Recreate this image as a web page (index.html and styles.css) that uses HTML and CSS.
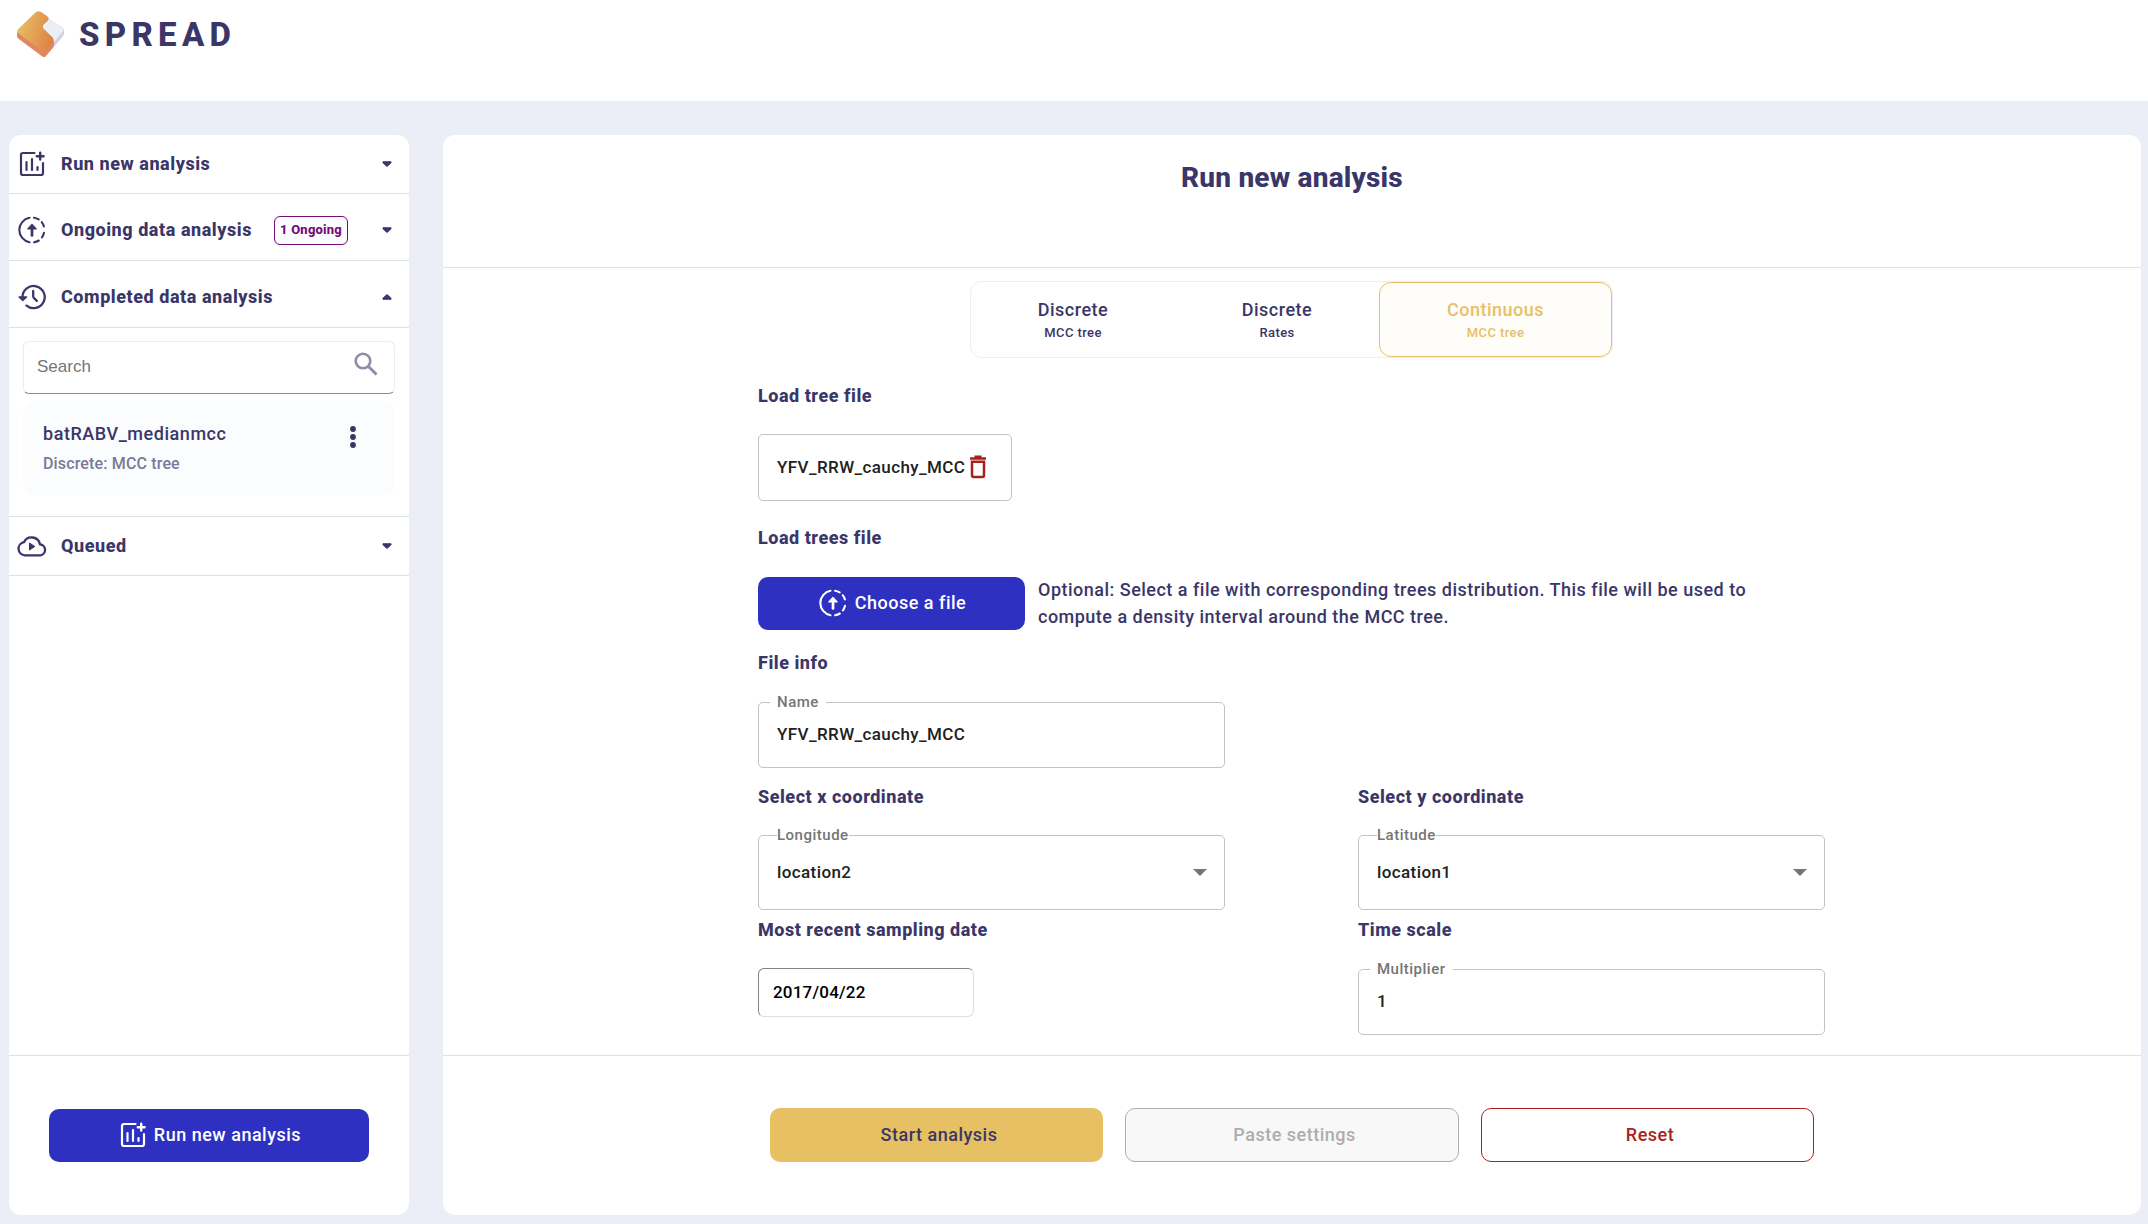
FILE: index.html
```html
<!DOCTYPE html>
<html lang="en">
<head>
<meta charset="utf-8">
<title>SPREAD</title>
<link rel="stylesheet" href="styles.css">
</head>
<body>
<svg class="defs" width="0" height="0" aria-hidden="true">
  <symbol id="chart" viewBox="0 0 28 28">
    <path d="M16.500 3H5a2 2 0 0 0-2 2v18a2 2 0 0 0 2 2h18a2 2 0 0 0 2-2V13M8.500 12v8M14 9v11M19.500 17v3" fill="none" stroke="currentColor" stroke-width="2.200" stroke-linecap="round"/>
    <path d="M22.200 2.800v6.800M18.800 6.200h6.800" fill="none" stroke="currentColor" stroke-width="2.400" stroke-linecap="round"/>
  </symbol>
  <symbol id="upload" viewBox="0 0 28 28">
    <path d="M11.500 1.800A12.400 12.400 0 0 0 11.500 26.200M16 1.700q2.500.4 4.700 1.700M23.700 6.200q1.500 1.900 2.200 4.200M26 16.800q-.6 2.600-2.100 4.700M20.800 24.500q-2.200 1.400-4.700 1.800" fill="none" stroke="currentColor" stroke-width="2.100" stroke-linecap="round"/>
    <path d="M14 12v7.500" fill="none" stroke="currentColor" stroke-width="2.700" stroke-linecap="round"/>
    <path d="M14 8.500l4.200 4.400H9.800z" fill="currentColor" stroke="currentColor" stroke-width="1.200" stroke-linejoin="round"/>
  </symbol>
  <symbol id="history" viewBox="0 0 28 28">
    <path d="M4.500 14A11.100 11.100 0 1 1 8.500 22.600M15.200 8v5.200q0 1 .7 1.700l2.900 3" fill="none" stroke="currentColor" stroke-width="2.300" stroke-linecap="round"/>
    <path d="M1 14h7.600l-3.800 3.500z" fill="currentColor" stroke="currentColor" stroke-width="1.300" stroke-linejoin="round"/>
  </symbol>
  <symbol id="cloud" viewBox="0 0 30 24">
    <path d="M8 21.300a6.600 6.600 0 0 1-1-13.100a8.500 8.500 0 0 1 16 2.200a5.500 5.500 0 0 1 .5 10.900z" fill="none" stroke="currentColor" stroke-width="2.300" stroke-linejoin="round"/>
    <path d="M12.500 9v7l5.300-3.500z" fill="currentColor" stroke="currentColor" stroke-linejoin="round"/>
  </symbol>
  <symbol id="caret" viewBox="0 0 10 6"><path d="M1 .7h8q.6.5 0 1.100L5.700 5q-.7.6-1.400 0L1 1.800Q.4 1.200 1 .7z" fill="currentColor" stroke="currentColor" stroke-width=".9"/></symbol>
</svg>

<header class="topbar">
  <svg class="logo" width="48" height="48" viewBox="0 0 48 48">
    <defs><linearGradient id="gold" x1="0" y1=".3" x2="1" y2=".6"><stop offset="0" stop-color="#e7c163"/><stop offset="1" stop-color="#de8245"/></linearGradient></defs>
    <path d="M33 10l13.500 8.500q1.500 1 1.500 3v3q0 1.500-1 2.500L38 38z" fill="#d3d1df"/>
    <path d="M31 9l15.500 9.500q2 1.500 .5 3.500L37.500 34l-10-12z" fill="#ebeef7"/>
    <path d="M1 23v4q0 1.500 1.500 2.700L26 47.300q2 1.500 3.700 0l7.300-8.500q1-1.200 1-3V32z" fill="#e28661"/>
    <path d="M20 3q2.500-1.500 5 0L31 7q3 2.500 .5 5L28 15.500q-2.200 2.500 .3 4.800L37 29q1.500 2 0 4.200L30 41.500q-2 1.800-4 .3L2 24q-2-1.800 0-3.800z" fill="url(#gold)"/>
  </svg>
  <h1 class="brand">SPREAD</h1>
</header>

<div class="layout">
  <aside class="sidebar">
    <nav class="menu">
      <div class="item item-first"><svg class="ico"><use href="#chart"/></svg><span>Run new analysis</span><svg class="caret"><use href="#caret"/></svg></div>
      <div class="item"><svg class="ico"><use href="#upload"/></svg><span>Ongoing data analysis</span><em class="badge">1 Ongoing</em><svg class="caret"><use href="#caret"/></svg></div>
      <div class="item"><svg class="ico"><use href="#history"/></svg><span>Completed data analysis</span><svg class="caret caret-up"><use href="#caret"/></svg></div>
      <div class="completed">
        <div class="search"><span>Search</span>
          <svg width="24" height="24" viewBox="0 0 24 24"><circle cx="9" cy="9" r="7.300" fill="none" stroke="currentColor" stroke-width="2.600"/><path d="M14.500 14.500L22.500 22.500" stroke="currentColor" stroke-width="3"/></svg>
        </div>
        <div class="result">
          <div><p class="result-name">batRABV_medianmcc</p><p class="result-kind">Discrete: MCC tree</p></div>
          <svg class="dots" width="6" height="22" viewBox="0 0 6 22" fill="currentColor"><circle cx="3" cy="3" r="2.900"/><circle cx="3" cy="11" r="2.900"/><circle cx="3" cy="19" r="2.900"/></svg>
        </div>
      </div>
      <div class="item item-queued"><svg class="ico ico-cloud"><use href="#cloud"/></svg><span>Queued</span><svg class="caret"><use href="#caret"/></svg></div>
    </nav>
    <div class="sidebar-foot"><button class="btn btn-primary btn-run"><svg class="ico"><use href="#chart"/></svg>Run new analysis</button></div>
  </aside>

  <main class="panel">
    <div class="panel-head"><h2>Run new analysis</h2></div>
    <div class="panel-body">
      <div class="tabs">
        <div class="tab">Discrete<small>MCC tree</small></div>
        <div class="tab">Discrete<small>Rates</small></div>
        <div class="tab tab-active">Continuous<small>MCC tree</small></div>
      </div>
      <form class="form">
        <section class="row row-tree">
          <h3>Load tree file</h3>
          <div class="file"><span>YFV_RRW_cauchy_MCC</span>
            <svg width="18" height="24" viewBox="0 0 18 24"><path d="M1 3.500h16M5.500 1.700h7" stroke="#a91f1c" stroke-width="2.400"/><path d="M3 6.800h12v13.400q0 1.700-1.700 1.700H4.700Q3 21.900 3 20.200z" fill="none" stroke="#a91f1c" stroke-width="2.500"/></svg>
          </div>
        </section>
        <section class="row row-trees">
          <h3>Load trees file</h3>
          <div class="choose">
            <button type="button" class="btn btn-primary btn-file"><svg class="ico"><use href="#upload"/></svg>Choose a file</button>
            <p>Optional: Select a file with corresponding trees distribution. This file will be used to compute a density interval around the MCC tree.</p>
          </div>
        </section>
        <section class="row row-info">
          <h3>File info</h3>
          <fieldset class="field"><legend>Name</legend><span>YFV_RRW_cauchy_MCC</span></fieldset>
        </section>
        <div class="row row-coords">
          <section><h3>Select x coordinate</h3>
            <fieldset class="field field-select"><legend>Longitude</legend><span>location2</span><i class="arrow"></i></fieldset></section>
          <section><h3>Select y coordinate</h3>
            <fieldset class="field field-select"><legend>Latitude</legend><span>location1</span><i class="arrow"></i></fieldset></section>
        </div>
        <div class="row row-time">
          <section><h3>Most recent sampling date</h3><div class="date">2017/04/22</div></section>
          <section><h3>Time scale</h3>
            <fieldset class="field field-multiplier"><legend>Multiplier</legend><span>1</span></fieldset></section>
        </div>
      </form>
    </div>
    <div class="panel-foot">
      <button class="btn btn-start">Start analysis</button>
      <button class="btn btn-paste">Paste settings</button>
      <button class="btn btn-reset">Reset</button>
    </div>
  </main>
</div>
</body>
</html>
```
FILE: styles.css
```css
* { box-sizing: border-box; }
body, h1, h2, h3, p { margin: 0; }
body {
  height: 1224px;
  display: flex;
  flex-direction: column;
  background: #ebeef7;
  color: #3a3668;
  font: 500 18px/22px Roboto, sans-serif;
  letter-spacing: .5px;
  overflow: hidden;
}
.defs { position: absolute; }
svg { flex: none; }

.topbar { height: 101px; flex: none; background: #fff; display: flex; align-items: flex-start; padding: 9px 16px; gap: 15px; }
.brand { font-size: 33px; line-height: 40px; font-weight: 800; letter-spacing: 5.3px; margin-top: 6px; }

.layout { display: flex; gap: 34px; padding: 34px 7px 9px 9px; flex: 1; }
.sidebar, .panel { background: #fff; border-radius: 12px; height: 1080px; display: flex; flex-direction: column; }
.sidebar { width: 400px; }
.panel { flex: 1; }

.menu { flex: 1; }
.item { height: 67px; border-bottom: 1px solid #dfdfe9; display: flex; align-items: center; padding: 6px 17px 0 9px; font-weight: 800; letter-spacing: .55px; }
.item-first { height: 59px; padding-top: 0; }
.item-queued { height: 59px; padding-top: 0; }
.ico { width: 28px; height: 28px; }
.item span { margin-left: 15px; }
.ico-cloud { width: 30px; height: 24px; margin: 0 -1px; }
.caret { width: 10px; height: 6px; margin-left: auto; }
.caret-up { transform: scaleY(-1); }
.badge { font: 800 13px/26px Roboto, sans-serif; letter-spacing: .2px; width: 74px; height: 29px; text-align: center; margin-left: 22px; color: #750d76; border: 1px solid #750d76; border-radius: 6px; background: #fbfcfe; }

.completed { height: 189px; border-bottom: 1px solid #dfdfe9; padding: 13px 14px 0; }
.search { height: 53px; border: 1px solid #ebebf0; border-bottom-color: #8a87a5; border-radius: 6px; display: flex; justify-content: space-between; padding: 10px 16px 0 13px; color: #8f8ca9; }
.search span { font: 400 17px/30px "Liberation Sans", sans-serif; letter-spacing: 0; color: #757575; }
.result { height: 95px; margin-top: 7px; border-radius: 12px; background: #fbfcfe; display: flex; justify-content: space-between; padding: 22px 39px 0 20px; }
.result-name { letter-spacing: .55px; }
.result-kind { font-size: 16px; margin-top: 8px; color: #7b7897; letter-spacing: .15px; }
.dots { margin-top: 3px; }

.btn { font: 500 18px/22px Roboto, sans-serif; letter-spacing: .5px; height: 54px; border-radius: 10px; border: 1px solid transparent; display: flex; align-items: center; justify-content: center; padding: 0 0 1px 5px; }
.btn-primary { background: #2e30c1; color: #fff; border: 0; height: 53px; padding-left: 2px; }
.sidebar-foot { height: 160px; border-top: 1px solid #dfdfe9; padding: 53px 40px 0; }
.btn-run { width: 320px; gap: 7px; }

.panel-head { height: 133px; border-bottom: 1px solid #dfdfe9; text-align: center; padding-top: 26px; }
h2 { font-size: 28px; line-height: 34px; font-weight: 800; letter-spacing: .2px; }
.panel-body { height: 787px; padding-top: 13px; }
.tabs { width: 643px; height: 77px; margin: 0 auto; border: 1px solid #ebeef7; border-radius: 12px; display: flex; position: relative; left: -.5px; }
.tab { width: 204px; padding-top: 17px; text-align: center; }
.tab small { display: block; font-size: 13px; line-height: 16px; margin-top: 4px; letter-spacing: .4px; }
.tab-active { width: 233px; color: #e7c063; border: 1px solid #e7c063; border-radius: 12px; background: #fefdf9; padding-top: 16px; }

.form { width: 1068px; margin: 27px auto 0; }
h3 { font-size: 18px; line-height: 22px; font-weight: 800; letter-spacing: .52px; }
.row-tree { height: 142px; }
.file { margin-top: 27px; width: 254px; height: 67px; border: 1px solid #c2c2c2; border-radius: 5px; padding: 0 24px 2px 18px; display: flex; align-items: center; justify-content: space-between; font-size: 17px; color: #212121; letter-spacing: .4px; }
.row-trees { height: 125px; }
.choose { display: flex; gap: 13px; margin-top: 28px; }
.btn-file { width: 267px; gap: 8px; flex: none; }
.choose p { width: 730px; line-height: 27px; letter-spacing: .49px; margin-top: -1px; }
.row-info { height: 134px; }
.row-info .field { margin-top: 20px; }
.field { width: 467px; height: 74px; margin: 19px 0 0; border: 1px solid #c2c2c2; border-radius: 5px; padding: 0 18px; font-size: 17px; color: #212121; letter-spacing: .4px; display: block; }
.field legend { font-size: 15px; line-height: 17px; height: 17px; color: #757575; padding: 0 7px; margin-left: -7px; letter-spacing: .5px; }
.field span { display: block; padding-top: 12px; }
.row-coords, .row-time { display: grid; grid-template-columns: 467px 467px; column-gap: 133px; }
.row-coords { height: 133px; }
.field-select { height: 83px; display: grid; grid-template-columns: 1fr auto; }
.field-select legend { padding: 0; margin-left: 0; }
.field-select span { padding-top: 17px; }
.arrow { align-self: start; margin: 25px -1px 0 0; border: 7px solid transparent; border-top-color: #757575; border-bottom: 0; }
.date { width: 216px; height: 49px; margin-top: 27px; border: 1px solid #dfdfe9; border-top-color: #858585; border-left-color: #858585; border-radius: 6px; padding: 12px 14px; font-size: 17px; color: #000; letter-spacing: .2px; }
.field-multiplier { margin-top: 20px; }

.panel-foot { flex: 1; border-top: 1px solid #dfdfe9; display: flex; justify-content: center; gap: 22px; padding-top: 52px; }
.panel-foot .btn { width: 333.5px; }
.btn-start { background: #e7c063; color: #3a3668; }
.btn-paste { background: #f8f8f8; color: #adadad; border-color: #adadad; }
.btn-reset { background: #fff; color: #a91f1c; border-color: #a91f1c; }
```
